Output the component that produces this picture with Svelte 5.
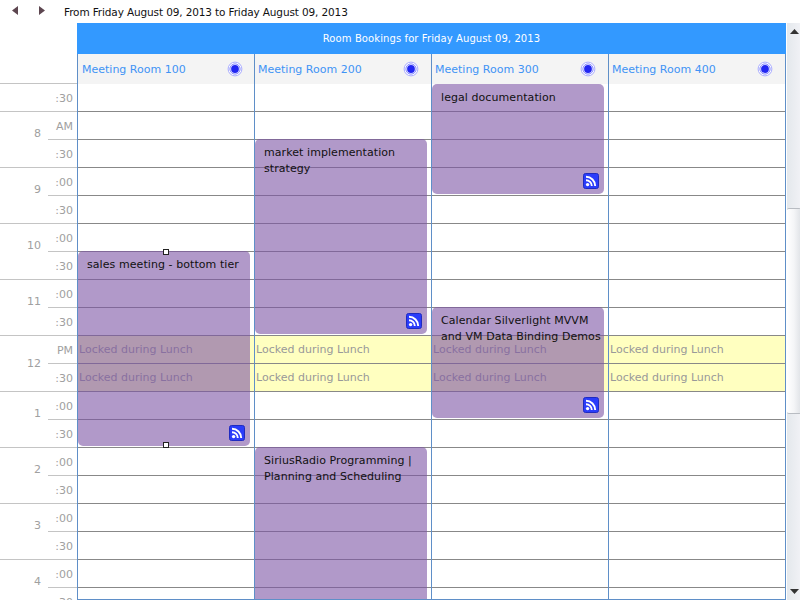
<script>
  const rooms = ['Meeting Room 100', 'Meeting Room 200', 'Meeting Room 300', 'Meeting Room 400'];

  const hours = [
    { label: '8', ampm: 'AM' },
    { label: '9' },
    { label: '10' },
    { label: '11' },
    { label: '12', ampm: 'PM' },
    { label: '1' },
    { label: '2' },
    { label: '3' },
    { label: '4' },
  ];

  // slot 0 is the 7:30 row, slots 9 and 10 are lunch
  const slots = Array.from({ length: 19 }, (_, i) => i);
  const lunch = [9, 10];

  const events = [
    { room: 0, top: 167, height: 195, text: 'sales meeting - bottom tier', rss: true, handles: true },
    { room: 1, top: 55, height: 195, text: 'market implementation strategy', rss: true },
    { room: 1, top: 363, height: 170, text: 'SiriusRadio Programming | Planning and Scheduling' },
    { room: 2, top: 0, height: 110, text: 'legal documentation', rss: true },
    { room: 2, top: 223, height: 111, text: 'Calendar Silverlight MVVM and VM Data Binding Demos', rss: true },
  ];
</script>

<div class="page">
  <div class="toolbar">
    <svg class="nav" width="6" height="9" viewBox="0 0 6 9"><path d="M6 0V9L0 4.500Z" fill="#5d4650" /></svg>
    <svg class="nav" width="6" height="9" viewBox="0 0 6 9"><path d="M0 0V9L6 4.500Z" fill="#5d4650" /></svg>
    <span class="range">From Friday August 09, 2013 to Friday August 09, 2013</span>
  </div>

  <div class="calendar">
    <div class="gutter">
      <div class="first-slot"><span>:30</span></div>
      {#each hours as h}
        <div class="hour">
          <div class="hour-label" class:noon={h.label === '12'}>{h.label}</div>
          <div class="mins">
            <div class="min-cell half"><span>{h.ampm ?? ':00'}</span></div>
            <div class="min-cell"><span>:30</span></div>
          </div>
        </div>
      {/each}
    </div>

    <div class="main">
      <div class="title">Room Bookings for Friday August 09, 2013</div>
      <div class="room-heads">
        {#each rooms as room}
          <div class="room-head">
            <span>{room}</span>
            <svg width="16" height="16" viewBox="0 0 16 16">
              <circle cx="8" cy="8" r="6.9" fill="#fff" stroke="#a9acff" stroke-width="1" />
              <circle cx="8" cy="8" r="5.1" fill="#fff" stroke="#8085ff" stroke-width="1" />
              <circle cx="8" cy="8" r="3.9" fill="#2226f2" />
            </svg>
          </div>
        {/each}
      </div>

      <div class="grid">
        {#each rooms as room, r}
          <div class="column">
            {#each slots as s}
              <div class="slot" class:locked={lunch.includes(s)}>
                {#if lunch.includes(s)}Locked during Lunch{/if}
              </div>
            {/each}
            {#each events.filter((e) => e.room === r) as e}
              <div class="event" style="top: {e.top}px; height: {e.height}px">
                <p>{e.text}</p>
                {#if e.rss}
                  <svg class="rss" width="16" height="16" viewBox="0 0 16 16">
                    <rect x="0.5" y="0.5" width="15" height="15" rx="2" fill="#2a3cfa" stroke="#1f2bc0" />
                    <circle cx="4.6" cy="11.6" r="1.7" fill="#fff" />
                    <path d="M3 7.200a5.800 5.800 0 0 1 5.800 5.800M3 3.800a9.200 9.200 0 0 1 9.200 9.200" fill="none" stroke="#fff" stroke-width="1.9" />
                  </svg>
                {/if}
                {#if e.handles}
                  <i class="handle top"></i>
                  <i class="handle bottom"></i>
                {/if}
              </div>
            {/each}
          </div>
        {/each}
      </div>
    </div>

    <div class="scrollbar">
      <div class="arrow"><svg width="9" height="5" viewBox="0 0 9 5"><path d="M4.500 0L9 5H0Z" fill="#333" /></svg></div>
      <div class="track">
        <div class="thumb"></div>
      </div>
      <div class="arrow"><svg width="9" height="5" viewBox="0 0 9 5"><path d="M0 0H9L4.500 5Z" fill="#333" /></svg></div>
    </div>
  </div>
</div>

<style>
  :global(body) {
    margin: 0;
    background: #fff;
  }

  .page {
    width: 800px;
    height: 600px;
    overflow: hidden;
    font-family: 'DejaVu Sans', Verdana, sans-serif;
    font-size: 11px;
  }

  .toolbar {
    height: 23px;
    display: flex;
    align-items: center;
    padding-left: 12px;
    box-sizing: border-box;
    color: #111;
  }

  .nav {
    margin: -2px 21px 0 0;
  }

  .nav + .nav {
    margin-right: 19px;
  }

  .range {
    font-size: 10.5px;
    letter-spacing: -0.13px;
    padding-top: 1px;
  }

  .calendar {
    display: flex;
    height: 577px;
    overflow: hidden;
  }

  .gutter {
    width: 77px;
    flex-shrink: 0;
    padding-top: 60px;
    color: #a0a0a0;
    box-sizing: border-box;
  }

  .first-slot {
    height: 27px;
    border-top: 1px solid #c4c4c4;
    display: flex;
    justify-content: flex-end;
    align-items: center;
    padding: 1px 4px 0 0;
    box-sizing: border-box;
  }

  .hour {
    height: 56px;
    box-sizing: border-box;
    border-top: 1px solid #c4c4c4;
    display: flex;
  }

  .first-slot {
    height: 28px;
  }

  .hour-label {
    width: 48px;
    box-sizing: border-box;
    padding: 15px 7px 0 0;
    text-align: right;
    color: #a0a0a0;
  }

  .hour-label.noon {
    padding-top: 21px;
  }

  .mins {
    flex: 1;
    display: flex;
    flex-direction: column;
  }

  .min-cell {
    height: 27px;
    flex-shrink: 0;
    box-sizing: border-box;
    display: flex;
    justify-content: flex-end;
    align-items: center;
    padding: 1px 4px 0 0;
  }

  .min-cell.half {
    height: 28px;
    border-bottom: 1px solid #c4c4c4;
  }

  .main {
    width: 709px;
    flex-shrink: 0;
    display: flex;
    flex-direction: column;
    border-left: 1px solid #5f8fc8;
    border-right: 1px solid #5f8fc8;
    border-bottom: 1px solid #5f8fc8;
    box-sizing: border-box;
    height: 577px;
  }

  .title {
    height: 31px;
    flex-shrink: 0;
    background: #3399ff;
    color: #fff;
    font-size: 10px;
    letter-spacing: 0.1px;
    line-height: 31px;
    text-align: center;
    margin: 0 -1px;
  }

  .room-heads {
    display: flex;
    height: 30px;
    flex-shrink: 0;
    background: #f4f4f4;
  }

  .room-head {
    width: 177px;
    box-sizing: border-box;
    display: flex;
    align-items: center;
    justify-content: space-between;
    padding: 0 12px 0 3px;
    color: #3f93f5;
    border-right: 1px solid #5f8fc8;
  }

  .room-head:first-child {
    padding: 0 11px 0 4px;
  }

  .room-head:last-child {
    border-right: none;
    width: 176px;
  }

  .grid {
    display: flex;
    flex: 1;
    overflow: hidden;
  }

  .column {
    position: relative;
    width: 177px;
    box-sizing: border-box;
    border-right: 1px solid #5f8fc8;
  }

  .column:last-child {
    border-right: none;
    width: 176px;
  }

  .slot {
    height: 28px;
    box-sizing: border-box;
    box-shadow: inset 0 -1px 0 #888;
    padding-left: 1px;
    line-height: 27px;
    color: #999;
    white-space: nowrap;
  }

  .slot.locked {
    background: #ffffc0;
  }

  .event {
    position: absolute;
    left: 0;
    width: 172px;
    box-sizing: border-box;
    padding: 6px 3px 6px 9px;
    background: rgba(125, 85, 165, 0.6);
    border-radius: 5px;
    line-height: 16px;
    letter-spacing: 0.07px;
    color: #111;
  }

  .event p {
    margin: 0;
  }

  .rss {
    position: absolute;
    right: 5px;
    bottom: 5px;
  }

  .handle {
    position: absolute;
    left: 85px;
    width: 4px;
    height: 4px;
    background: #fff;
    border: 1px solid #222;
  }

  .handle.top {
    top: -2px;
  }

  .handle.bottom {
    bottom: -2px;
  }

  .scrollbar {
    width: 14px;
    flex-shrink: 0;
    background: linear-gradient(90deg, #e4e8ec, #f1f2f6);
    display: flex;
    flex-direction: column;
    margin-left: 1px;
  }

  .arrow {
    height: 17px;
    flex-shrink: 0;
    display: flex;
    align-items: center;
    justify-content: center;
  }

  .track {
    flex: 1;
    padding-top: 168px;
    box-sizing: border-box;
  }

  .thumb {
    height: 206px;
    background: linear-gradient(90deg, #fff, #f4f5f7 50%, #dfe2e6);
    border-top: 1px solid #b8bcc2;
    border-bottom: 1px solid #b8bcc2;
    border-radius: 2px;
    box-sizing: border-box;
  }
</style>
